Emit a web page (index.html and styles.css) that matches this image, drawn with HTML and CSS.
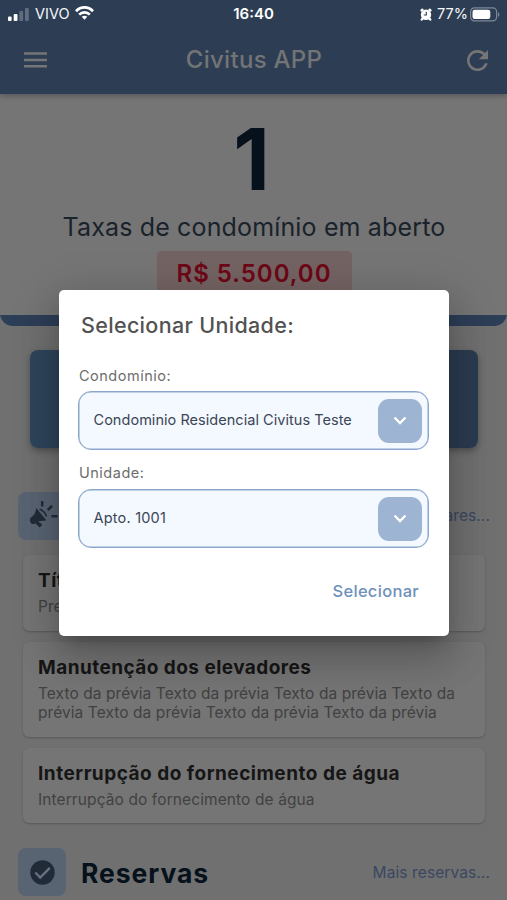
FILE: index.html
```
<!DOCTYPE html>
<html lang="pt-BR">
<head>
<meta charset="utf-8">
<title>Civitus APP</title>
<link rel="stylesheet" href="styles.css">
</head>
<body>
<div class="screen">
  <header class="top">
    <div class="status">
      <div class="status-left">
        <svg class="signal" width="21" height="13" viewBox="0 0 21 13"><rect x="0" y="8.5" width="3.6" height="4.5" rx="1" fill="#fff"/><rect x="5.7" y="6" width="3.8" height="7" rx="1" fill="#fff"/><rect x="11.3" y="3" width="3.8" height="10" rx="1" fill="#5f6d80"/><rect x="17" y="0" width="3.8" height="13" rx="1" fill="#5f6d80"/></svg>
        <span class="carrier">VIVO</span>
        <svg class="wifi" width="19" height="14" viewBox="0 0 19 14"><g fill="none" stroke="#fff" stroke-width="2.7"><path d="M1 5.2C5.8.2 13.2.2 18 5.2"/><path d="M4.2 8.6c3-3 7.6-3 10.600 0"/></g><path d="M6.700 10.800c1.700-1.400 3.900-1.400 5.600 0L9.500 13.800z" fill="#fff"/></svg>
      </div>
      <span class="clock">16:40</span>
      <div class="status-right">
        <svg class="alarm" width="12" height="13" viewBox="0 0 12 13"><circle cx="6" cy="6.700" r="5.200" fill="#fff"/><path d="M1.600 2.400 2.400 1.700M10.400 2.400 9.600 1.700M2.400 10.800 1.800 11.500M9.600 10.800l.6.700" stroke="#fff" stroke-width="2.400" stroke-linecap="round"/><path d="M6.300 3.800v3.200H3.800" fill="none" stroke="#2d3e54" stroke-width="1.100"/></svg>
        <span class="percent">77%</span>
        <svg class="battery" width="30" height="15" viewBox="0 0 30 15"><rect x=".6" y=".9" width="26" height="13" rx="3.800" fill="none" stroke="#7c8898" stroke-width="1.200"/><rect x="2.500" y="2.800" width="17.800" height="9.200" rx="2.200" fill="#fff"/><path d="M28 5.200c1.800.6 1.800 4 0 4.600z" fill="#7c8898"/></svg>
      </div>
    </div>
    <div class="appbar">
      <svg class="menu" width="23" height="16" viewBox="0 0 23 16"><path d="M0 1.500h23M0 8h23M0 14.200h23" stroke="#757575" stroke-width="2.500"/></svg>
      <h1 class="title">Civitus APP</h1>
      <svg class="refresh" width="21" height="21" viewBox="4 4 16 16"><path fill="#757575" d="M17.650 6.350C16.200 4.900 14.210 4 12 4c-4.420 0-7.990 3.580-7.990 8s3.570 8 7.990 8c3.730 0 6.840-2.550 7.730-6h-2.080c-.82 2.330-3.040 4-5.650 4-3.310 0-6-2.690-6-6s2.690-6 6-6c1.660 0 3.140.69 4.220 1.780L13 11h7V4z"/></svg>
    </div>
  </header>

  <section class="summary">
    <div class="count">1</div>
    <div class="caption">Taxas de condomínio em aberto</div>
    <div class="amount">R$ 5.500,00</div>
  </section>

  <div class="banner"></div>

  <div class="section-head notices">
    <span class="tile"><svg width="32" height="32" viewBox="0 0 32 32"><g fill="#212b38"><path d="M10.200 8 20.300 20.200 18 20.800l-6 .4 4.300 3.500-2.600 2.900-4.500-4.400C7 24.800 5.600 24 4.600 22.400c-1.300-2-.9-4.100 1-5.400 2.800-2 4.200-4.600 4.600-9z"/></g><path d="M16.200 1v5.500M26 5.800l-4.200 4.200M25.500 16.200h6" fill="none" stroke="#212b38" stroke-width="2.500"/><path d="M13.600 9.200c3 .8 6.200 4.300 6.900 7.300" fill="none" stroke="#212b38" stroke-width="1.600"/></svg></span>
    <span class="more">Mais familiares...</span>
  </div>

  <article class="card">
    <h2>Título</h2>
    <p>Previa</p>
  </article>
  <article class="card">
    <h2>Manutenção dos elevadores</h2>
    <p>Texto da prévia Texto da prévia Texto da prévia Texto da<br>prévia Texto da prévia Texto da prévia Texto da prévia</p>
  </article>
  <article class="card last">
    <h2>Interrupção do fornecimento de água</h2>
    <p>Interrupção do fornecimento de água</p>
  </article>

  <div class="section-head reserves">
    <span class="tile"><svg width="25" height="25" viewBox="0 0 25 25"><circle cx="12.500" cy="12.500" r="12.200" fill="#212b38"/><path d="m5.300 12.500 4.900 5L19.800 7.800" fill="none" stroke="#657080" stroke-width="2.400"/></svg></span>
    <h2 class="heading">Reservas</h2>
    <span class="more">Mais reservas...</span>
  </div>

  <div class="dialog">
    <h2 class="dialog-title">Selecionar Unidade:</h2>
    <label class="label">Condomínio:</label>
    <div class="select"><span>Condominio Residencial Civitus Teste</span><i class="arrow"><svg width="14" height="9" viewBox="0 0 14 9"><path d="m1.500 1.500 5.500 5.500 5.500-5.500" fill="none" stroke="#fff" stroke-width="2.300"/></svg></i></div>
    <label class="label second">Unidade:</label>
    <div class="select"><span class="unit">Apto. 1001</span><i class="arrow"><svg width="14" height="9" viewBox="0 0 14 9"><path d="m1.500 1.500 5.500 5.500 5.500-5.500" fill="none" stroke="#fff" stroke-width="2.300"/></svg></i></div>
    <div class="action">Selecionar</div>
  </div>
</div>
</body>
</html>
```
FILE: styles.css
```
* { box-sizing: border-box; margin: 0; padding: 0; }
body { font-family: Inter, "Liberation Sans", sans-serif; background: #707070; }
svg { display: block; flex: none; }
.screen { position: relative; width: 507px; height: 900px; overflow: hidden; background: #707070; white-space: nowrap; }

.top { position: relative; z-index: 1; height: 94px; background: #2d3e54; box-shadow: 0 2px 5px rgba(0,0,0,.25); }
.status { display: grid; grid-template-columns: 1fr auto 1fr; align-items: center; height: 28px; padding: 0 7px 0 8px; color: #f5f7fa; font-size: 14.5px; line-height: 28px; }
.status-left, .status-right { display: flex; align-items: center; }
.status-right { justify-content: flex-end; }
.carrier { margin: 0 5px 0 6px; }
.wifi { margin-top: -2px; }
.clock { margin-left: -1px; font-size: 15px; font-weight: 600; color: #fff; }
.percent { margin: 0 2px 0 5px; }
.appbar { display: flex; align-items: center; justify-content: space-between; height: 64px; padding: 0 19px 0 24px; }
.title { margin: -1px 6px 0 0; font-size: 24px; font-weight: 500; letter-spacing: .3px; color: #737475; }

.summary { display: flex; flex-direction: column; align-items: center; height: 232px; background: linear-gradient(#757575 221px, #2d3e57 221px); border-radius: 0 0 13px 13px; }
.count { margin: 22px 4px 0 0; height: 88px; line-height: 88px; font-size: 85px; font-weight: 700; color: #06111c; }
.caption { margin: 7px 0 0 1px; height: 32px; line-height: 32px; font-size: 25px; letter-spacing: .15px; color: #1a222b; }
.amount { margin: 8px 0 0 1px; width: 195px; height: 44px; line-height: 45px; text-align: center; font-size: 24px; font-weight: 600; letter-spacing: 1px; color: #6d0716; background: #746363; border-radius: 5px; }

.banner { margin: 24px 29px 0 30px; height: 98px; border-radius: 8px; background: linear-gradient(90deg, #2f455c, #2b3b50); box-shadow: 0 3px 6px rgba(0,0,0,.3); }

.section-head { display: flex; align-items: center; height: 48px; padding: 0 17px 0 18px; }
.notices { margin-top: 44px; }
.notices .more { margin-top: -1px; }
.tile { display: flex; align-items: center; justify-content: center; width: 48px; height: 48px; border-radius: 8px; background: #596473; }
.heading { margin: 2px 0 0 15px; font-size: 26.5px; font-weight: 700; letter-spacing: .95px; color: #06111c; }
.more { margin: 1px 0 0 auto; font-size: 15.5px; letter-spacing: .1px; color: #3a4761; }

.card { margin: 0 22px 11px 23px; padding: 13px 15px 15px; border-radius: 6px; background: #757575; box-shadow: 0 1px 2px rgba(0,0,0,.22); }
.notices + .card { margin-top: 15px; }
.card h2 { height: 25px; line-height: 26px; font-size: 19px; font-weight: 650; letter-spacing: .45px; color: #161616; }
.card p { margin-top: 4px; margin-bottom: -1px; font-size: 15.5px; line-height: 19.500px; letter-spacing: .07px; color: #414141; }
.last h2 { letter-spacing: .5px; }
.last p { letter-spacing: .1px; }
.reserves { margin-top: 25px; }

.dialog { position: absolute; left: 59px; top: 290px; z-index: 2; width: 390px; height: 345.500px; padding: 20px; border-radius: 5px; background: #fff; box-shadow: 0 11px 15px -7px rgba(0,0,0,.2), 0 24px 38px 3px rgba(0,0,0,.14), 0 9px 46px 8px rgba(0,0,0,.12); }
.dialog-title { margin-left: 2px; height: 30px; line-height: 30px; font-size: 21.500px; font-weight: 500; letter-spacing: .33px; color: #525252; }
.label { display: block; margin-top: 26px; height: 20px; line-height: 20px; font-size: 14.500px; letter-spacing: .5px; color: #6d6d6d; }
.label.second { margin-top: 13px; }
.second + .select { margin-top: 6px; }
.select { display: flex; align-items: center; justify-content: space-between; margin: 5px -1px 0; width: 351px; height: 59px; padding: 0 6px 0 14px; border: 1px solid #8ba7cc; border-radius: 13px; background: #f4f8ff; box-shadow: inset 0 0 0 .5px #8ba7cc; font-size: 14.500px; letter-spacing: .04px; color: #3b4656; }
.select span { margin: -2px 0 0 .5px; }
.select .unit { letter-spacing: .2px; }
.arrow { display: flex; align-items: center; justify-content: center; width: 44px; height: 44px; border-radius: 11px; background: #9db4d3; }
.action { margin: 30px 10px 0 0; height: 26px; line-height: 26px; text-align: right; font-size: 16.500px; font-weight: 500; letter-spacing: .3px; color: #6e91bc; }
```
